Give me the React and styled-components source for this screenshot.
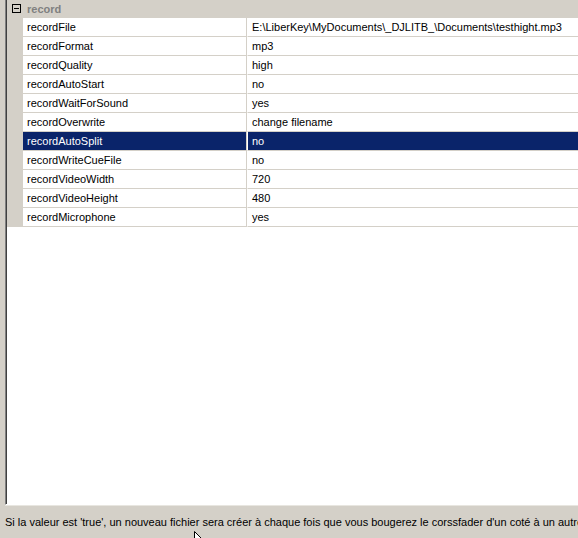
import React from 'react';
import styled, { createGlobalStyle } from 'styled-components';

const GlobalStyle = createGlobalStyle`
  html, body {
    margin: 0;
    padding: 0;
    background: #d4d0c8;
  }
  body {
    font-family: "Liberation Sans", Arial, sans-serif;
    font-size: 11px;
    color: #000;
  }
`;

const properties = [
  ['recordFile', 'E:\\LiberKey\\MyDocuments\\_DJLITB_\\Documents\\testhight.mp3'],
  ['recordFormat', 'mp3'],
  ['recordQuality', 'high'],
  ['recordAutoStart', 'no'],
  ['recordWaitForSound', 'yes'],
  ['recordOverwrite', 'change filename'],
  ['recordAutoSplit', 'no'],
  ['recordWriteCueFile', 'no'],
  ['recordVideoWidth', '720'],
  ['recordVideoHeight', '480'],
  ['recordMicrophone', 'yes'],
];

const selectedName = 'recordAutoSplit';

function App() {
  return (
    <>
      <GlobalStyle />
      <Window>
        <Panel>
          <Frame>
            <Grid>
              <CategoryRow>
                <Margin>
                  <Toggle />
                </Margin>
                <CategoryTitle>record</CategoryTitle>
              </CategoryRow>
              {properties.map(([name, value]) => {
                const selected = name === selectedName;
                return (
                  <Row key={name}>
                    <Margin />
                    <NameCell selected={selected}>{name}</NameCell>
                    <ValueCell selected={selected}>{value}</ValueCell>
                  </Row>
                );
              })}
            </Grid>
          </Frame>
        </Panel>
        <StatusBar>
          Si la valeur est 'true', un nouveau fichier sera créer à chaque fois que vous bougerez le corssfader d'un coté à un autre
        </StatusBar>
        <Cursor viewBox="0 0 12 19" width="12" height="19">
          <path d="M0.5 0.5 L0.5 15.5 L4 12 L6.5 18 L8.5 17 L6 11 L11 11 Z" fill="#fff" stroke="#000" strokeWidth="1" />
        </Cursor>
      </Window>
    </>
  );
}

export default App;

const Window = styled.div`
  position: relative;
  width: 578px;
  height: 538px;
  overflow: hidden;
  display: flex;
  flex-direction: column;
  background: #d4d0c8;
`;

const Panel = styled.div`
  padding-left: 5px;
  margin-right: -20px;
`;

const Frame = styled.div`
  height: 504px;
  background: #fff;
  border-left: 1px solid #808080;
  border-bottom: 1px solid #ffffff;
  box-shadow: inset 1px 0 0 #404040, 0 1px 0 #e8e6e0;
  padding-left: 1px;
  overflow: hidden;
`;

const Grid = styled.div`
  display: flex;
  flex-direction: column;
`;

const CategoryRow = styled.div`
  display: flex;
  height: 18px;
  background: #d4d0c8;
  align-items: center;
`;

const Margin = styled.div`
  flex: 0 0 16px;
  align-self: stretch;
  background: #d4d0c8;
  display: flex;
  align-items: center;
  justify-content: center;
`;

const Toggle = styled.div`
  position: relative;
  width: 9px;
  height: 9px;
  box-sizing: border-box;
  border: 1px solid #000;
  margin: 0 0 1px 2px;
  &::after {
    content: '';
    position: absolute;
    left: 1px;
    right: 1px;
    top: 3px;
    height: 1px;
    background: #000;
  }
`;

const CategoryTitle = styled.div`
  padding-left: 4px;
  font-weight: bold;
  color: #808080;
`;

const Row = styled.div`
  display: flex;
  height: 19px;
`;

const NameCell = styled.div`
  flex: 0 0 224px;
  box-sizing: border-box;
  padding: 0 4px;
  line-height: 18px;
  border-bottom: 1px solid #d4d0c8;
  border-right: 1px solid #d4d0c8;
  background: ${({ selected }) => (selected ? '#0a246a' : '#fff')};
  color: ${({ selected }) => (selected ? '#fff' : '#000')};
  white-space: nowrap;
`;

const ValueCell = styled.div`
  flex: 1;
  box-sizing: border-box;
  padding: 0 4px;
  line-height: 18px;
  border-bottom: 1px solid #d4d0c8;
  border-left: ${({ selected }) => (selected ? '1px solid #fff' : '1px solid transparent')};
  background: ${({ selected }) => (selected ? '#0a246a' : '#fff')};
  background-clip: padding-box;
  color: ${({ selected }) => (selected ? '#fff' : '#000')};
  white-space: nowrap;
`;

const StatusBar = styled.div`
  padding: 11px 0 0 5px;
  white-space: nowrap;
  line-height: 13px;
`;

const Cursor = styled.svg`
  position: absolute;
  left: 194px;
  top: 531px;
`;
